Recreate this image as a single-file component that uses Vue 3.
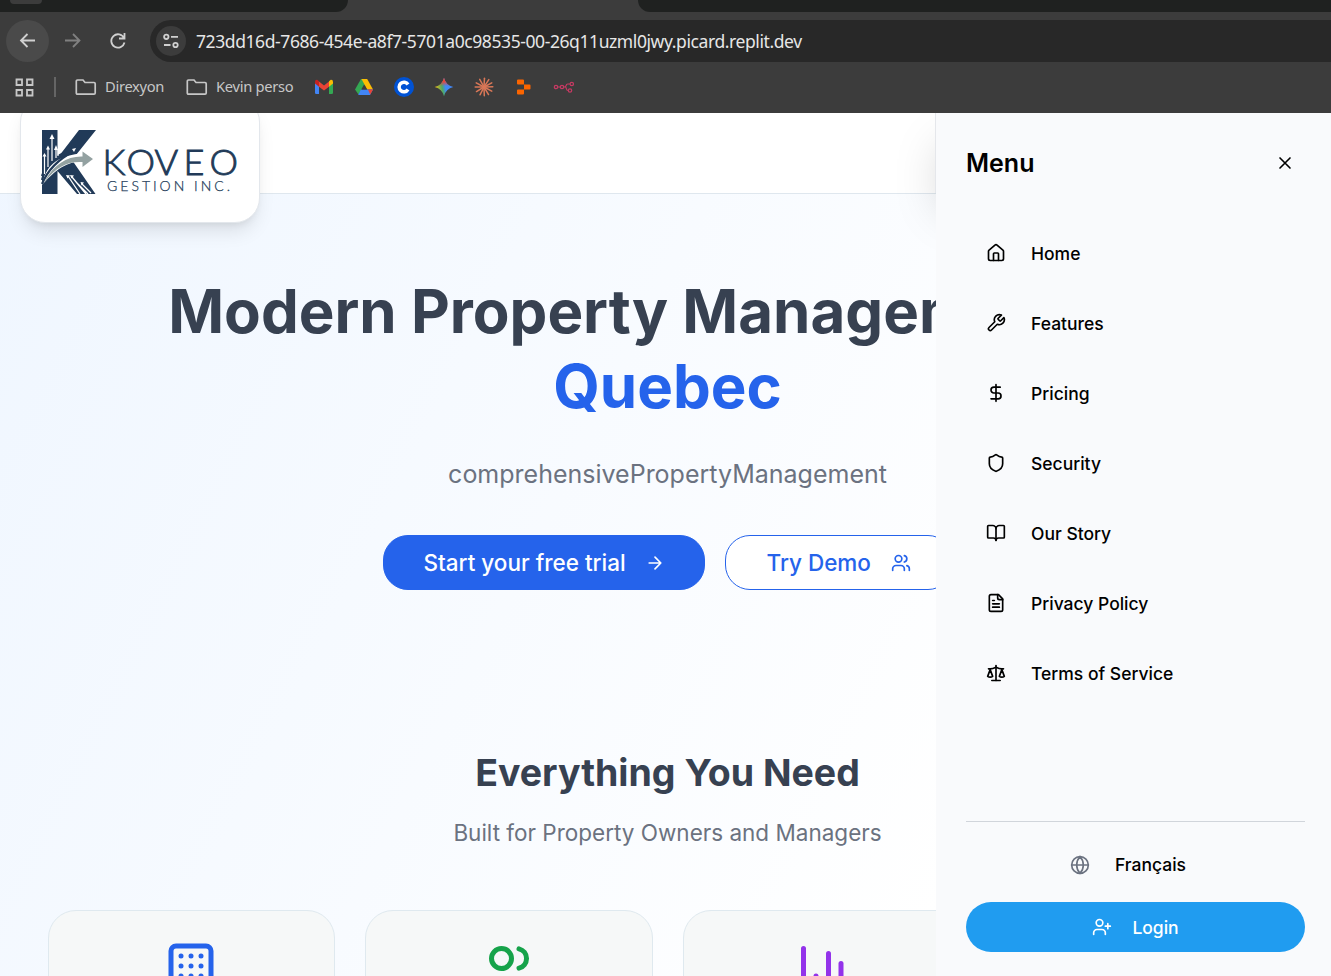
<script setup>
const menu = [
  { label: 'Home', d: ['M15 21v-8a1 1 0 0 0-1-1h-4a1 1 0 0 0-1 1v8', 'M3 10a2 2 0 0 1 .709-1.528l7-5.999a2 2 0 0 1 2.582 0l7 5.999A2 2 0 0 1 21 10v9a2 2 0 0 1-2 2H5a2 2 0 0 1-2-2z'] },
  { label: 'Features', d: ['M14.7 6.3a1 1 0 0 0 0 1.4l1.6 1.6a1 1 0 0 0 1.4 0l3.77-3.77a6 6 0 0 1-7.94 7.94l-6.91 6.91a2.12 2.12 0 0 1-3-3l6.91-6.91a6 6 0 0 1 7.94-7.94l-3.76 3.76z'] },
  { label: 'Pricing', d: ['M12 2v20', 'M17 5H9.5a3.5 3.5 0 0 0 0 7h5a3.5 3.5 0 0 1 0 7H6'] },
  { label: 'Security', d: ['M20 13c0 5-3.5 7.5-7.66 8.95a1 1 0 0 1-.67-.01C7.5 20.5 4 18 4 13V6a1 1 0 0 1 1-1c2 0 4.5-1.2 6.24-2.72a1.17 1.17 0 0 1 1.52 0C14.51 3.81 17 5 19 5a1 1 0 0 1 1 1z'] },
  { label: 'Our Story', d: ['M12 7v14', 'M3 18a1 1 0 0 1-1-1V4a1 1 0 0 1 1-1h5a4 4 0 0 1 4 4 4 4 0 0 1 4-4h5a1 1 0 0 1 1 1v13a1 1 0 0 1-1 1h-6a3 3 0 0 0-3 3 3 3 0 0 0-3-3z'] },
  { label: 'Privacy Policy', d: ['M15 2H6a2 2 0 0 0-2 2v16a2 2 0 0 0 2 2h12a2 2 0 0 0 2-2V7Z', 'M14 2v4a2 2 0 0 0 2 2h4', 'M10 9H8', 'M16 13H8', 'M16 17H8'] },
  { label: 'Terms of Service', d: ['m16 16 3-8 3 8c-.87.65-1.92 1-3 1s-2.13-.35-3-1Z', 'm2 16 3-8 3 8c-.87.65-1.92 1-3 1s-2.13-.35-3-1Z', 'M7 21h10', 'M12 3v18', 'M3 7h2c2 0 5-1 7-2 2 1 5 2 7 2h2'] },
]
const windows = [6, 10, 14].flatMap((y) => [8, 12, 16].map((x) => `M${x} ${y}h.01`))
const cards = [
  { tone: 'blue', d: ['M6 2h12a2 2 0 0 1 2 2v16a2 2 0 0 1-2 2H6a2 2 0 0 1-2-2V4a2 2 0 0 1 2-2z', 'M9 22v-4h6v4', ...windows] },
  { tone: 'green', d: ['M16 21v-2a4 4 0 0 0-4-4H6a4 4 0 0 0-4 4v2', 'M5 7a4 4 0 1 0 8 0a4 4 0 1 0-8 0', 'M22 21v-2a4 4 0 0 0-3-3.87', 'M16 3.13a4 4 0 0 1 0 7.75'] },
  { tone: 'purple', d: ['M3 3v18h18', 'M18 17V9', 'M13 17V5', 'M8 17v-3'] },
  { tone: 'blue', d: [] },
]
const rays = [3, 33, 62, 88, 118, 149, 178, 207, 239, 270, 298, 331]
</script>

<template>
  <div class="window">
    <div class="chrome">
      <div class="tabs">
        <div class="tab-left"><span class="tab-chip"></span></div>
        <div class="tab-active"></div>
        <div class="tab-right"></div>
      </div>
      <div class="toolbar">
        <div class="nav-btn back">
          <svg width="42" height="42" viewBox="0 0 42 42"><path d="M29 20.500H15M21.500 14l-6.500 6.500 6.500 6.500" /></svg>
        </div>
        <svg class="forward" width="20" height="20" viewBox="0 0 20 20"><path d="M2 9.500h14M10 3l6.500 6.500-6.500 6.500" /></svg>
        <svg class="reload" width="20" height="20" viewBox="0 0 20 20"><path d="M16 7A6.700 6.700 0 1 0 16.500 11.500M16.500 2v5.500H11" /></svg>
        <div class="address">
          <div class="site-info">
            <svg width="18" height="18" viewBox="0 0 18 18"><circle cx="4.300" cy="4.800" r="2.200" /><path d="M9 4.800h7M2 13h6.500" /><circle cx="13.500" cy="13" r="2.200" /></svg>
          </div>
          <span class="url">723dd16d-7686-454e-a8f7-5701a0c98535-00-26q11uzml0jwy.picard.replit.dev</span>
        </div>
      </div>
      <div class="bookmarks">
        <svg class="apps" width="20" height="20" viewBox="0 0 20 20"><path d="M2.500 2.500H8V8H2.500zM13 2.500h5.500V8H13zM2.500 13H8v5.500H2.500zM13 13h5.500v5.500H13z" /></svg>
        <span class="divider"></span>
        <svg class="folder first" width="22" height="18" viewBox="0 0 22 18"><path d="M2.500 2h5.500l2 2.500h9q1.200 0 1.200 1.200v9.300q0 1.200-1.200 1.200H2.500q-1.200 0-1.200-1.200V3.200Q1.300 2 2.500 2z" /></svg>
        <span class="bm direxyon">Direxyon</span>
        <svg class="folder" width="22" height="18" viewBox="0 0 22 18"><path d="M2.500 2h5.500l2 2.500h9q1.200 0 1.200 1.200v9.300q0 1.200-1.200 1.200H2.500q-1.200 0-1.200-1.200V3.200Q1.300 2 2.500 2z" /></svg>
        <span class="bm kevin">Kevin perso</span>
        <div class="favicons">
          <svg viewBox="0 0 20 20"><path fill="#4285f4" d="M1 5l4 3v9H2.200Q1 17 1 15.800z" /><path fill="#34a853" d="M19 5l-4 3v9h2.800q1.200 0 1.200-1.200z" /><path fill="#ea4335" d="M5 4.500l5 4 5-4v5.200l-5 3.900-5-3.900z" /><path fill="#c5221f" d="M1 5q0-2.500 2.200-2.200L5 4.200v5.500L1 6.600z" /><path fill="#fbbc04" d="M19 5q0-2.500-2.200-2.200L15 4.200v5.500l4-3.100z" /></svg>
          <svg viewBox="0 0 20 20"><path fill="#34a853" d="M7 2h3.500l2 3.200L4.500 17.500 1 12.500z" /><path fill="#fbbc04" d="M7.500 2h5.700L19 12.500h-5.800z" /><path fill="#4285f4" d="M6.800 12.500H19L16 18H4.200z" /><path fill="#ea4335" d="M14 12.500h5L16.200 17.500z" /><path fill="#3c3c3c" d="M10 7.600l2.900 4.900H7.200z" /></svg>
          <svg viewBox="0 0 20 20"><circle cx="10" cy="10" r="10" fill="#0052d4" /><path d="M14 7.500A4.800 4.800 0 1 0 14 12.500" fill="none" stroke="#fff" stroke-width="3.400" /></svg>
          <svg viewBox="0 0 20 20">
            <defs><linearGradient id="spark" x1="0" y1="0.600" x2="1" y2="0.400"><stop offset="0" stop-color="#fbbc04" /><stop offset=".4" stop-color="#4fa866" /><stop offset=".58" stop-color="#3f8bf5" /><stop offset="1" stop-color="#4285f4" /></linearGradient><linearGradient id="sparkTop" x1="0" y1="0" x2="0" y2="1"><stop offset="0" stop-color="#ea4335" /><stop offset=".2" stop-color="#ea4335" /><stop offset=".45" stop-color="#ea4335" stop-opacity="0" /></linearGradient></defs>
            <path fill="url(#spark)" d="M10 .7Q11.800 8.200 19.300 10 11.800 11.800 10 19.300 8.200 11.800.7 10 8.200 8.200 10 .7z" /><path fill="url(#sparkTop)" d="M10 .7Q11.800 8.200 19.300 10 11.800 11.800 10 19.300 8.200 11.800.7 10 8.200 8.200 10 .7z" />
          </svg>
          <svg viewBox="0 0 20 20"><g stroke="#d97757" stroke-width="1.500" stroke-linecap="round"><path v-for="r in rays" :key="r" d="M10 10V1.200" :transform="`rotate(${r} 10 10)`" /></g></svg>
          <svg viewBox="0 0 20 20"><path fill="#fc6500" d="M4 2.500h5q1 0 1 1v4H4q-1 0-1-1v-3q0-1 1-1zM10 7.500h5.500q1 0 1 1v3q0 1-1 1H10zM3 13.500q0-1 1-1h6v4q0 1-1 1H4q-1 0-1-1z" /></svg>
          <svg viewBox="0 0 20 20" class="nodes"><circle cx="2" cy="10" r="1.700" /><circle cx="8" cy="10" r="1.700" /><circle cx="17.800" cy="7" r="1.700" /><circle cx="16" cy="13.500" r="1.700" /><path d="M3.700 10h2.600M9.700 10h1q1.200 0 1.400-1.300Q12.300 7 13.800 7h2.300M11 10q1.200 0 1.400 1.800.2 1.700 2 1.700" /></svg>
        </div>
      </div>
    </div>

    <div class="page">
      <header class="header">
        <div class="logo-card">
          <svg class="mark" width="56" height="66" viewBox="0 0 56 66">
            <path fill="#213a58" d="M1 1h15.500v28L38 1h17L31 31 54.500 65H36L16.500 42v23H1z" />
            <path fill="#fff" d="M1 56C4 38 15 26 44 24v9C25 31 13 43 1 56z" />
            <path d="M1 51C5 36 13 28 23 24M1 47c3-9 8-16 15-21" stroke="#213a58" stroke-width="2.200" fill="none" />
            <path d="M1 55C7 40 18 30 33 22" stroke="#213a58" stroke-width="2.200" fill="none" />
            <path fill="#93a1a1" d="M5 50C13 36 26 27 41.500 27.500v-5L52 30l-10.500 8v-5C28 32 15 37 3 54z" />
            <path d="M3.500 45V27M7 38V20M11 32V8M15 29V20M17 27V20" stroke="#fff" stroke-width="1.200" />
            <path fill="#fff" d="M3.500 24l2 3.500h-4zM7 16.500l2 4H5zM11 5l2.500 5h-5zM15 16l2 5h-4zM31 20l4-1-2 4z" />
            <path d="M27 47l12 18M31 48l14 17M35 53l12 12M41 55l9 9" stroke="#fff" stroke-width="1.300" />
            <path fill="#fff" d="M25 46l4 .5-2.500 3zM29 46l4 .5-2.500 3zM39.500 53l3.500.5-2.500 3z" />
          </svg>
          <svg class="wordmark" width="136" height="66" viewBox="0 0 136 66">
            <text class="brand" x="-2.500 21.500 49.500 78.500 104.500" y="45.500">KOVEO</text>
            <text class="tag" x="2" y="62" textLength="123">GESTION INC.</text>
          </svg>
        </div>
      </header>

      <main class="hero">
        <h1>Modern Property Management for<br /><span>Quebec</span></h1>
        <p class="lead">comprehensivePropertyManagement</p>
        <div class="actions">
          <button class="btn primary">Start your free trial
            <svg class="ico" viewBox="0 0 24 24"><path d="M5 12h14M12 5l7 7-7 7" /></svg>
          </button>
          <button class="btn outline">Try Demo
            <svg class="ico" viewBox="0 0 24 24"><path d="M16 21v-2a4 4 0 0 0-4-4H6a4 4 0 0 0-4 4v2M22 21v-2a4 4 0 0 0-3-3.870M16 3.130a4 4 0 0 1 0 7.750" /><circle cx="9" cy="7" r="4" /></svg>
          </button>
        </div>
      </main>

      <section class="features">
        <h2>Everything You Need</h2>
        <p>Built for Property Owners and Managers</p>
        <div class="grid">
          <div v-for="(c, i) in cards" :key="i" class="card" :class="c.tone">
            <svg viewBox="0 0 24 24"><path v-for="d in c.d" :key="d" :d="d" /></svg>
          </div>
        </div>
      </section>

      <div class="drawer-shade"></div>
      <aside class="drawer">
        <div class="drawer-head">
          <h3>Menu</h3>
          <svg class="ico" viewBox="0 0 24 24"><path d="M18 6 6 18M6 6l12 12" /></svg>
        </div>
        <nav>
          <a v-for="m in menu" :key="m.label">
            <svg class="ico" viewBox="0 0 24 24"><path v-for="d in m.d" :key="d" :d="d" /></svg>
            <span>{{ m.label }}</span>
          </a>
        </nav>
        <div class="drawer-foot">
          <div class="lang">
            <svg class="ico" viewBox="0 0 24 24"><circle cx="12" cy="12" r="10" /><path d="M12 2a14.500 14.500 0 0 0 0 20 14.500 14.500 0 0 0 0-20M2 12h20" /></svg>
            <span>Français</span>
          </div>
          <button class="login">
            <svg class="ico" viewBox="0 0 24 24"><path d="M16 21v-2a4 4 0 0 0-4-4H6a4 4 0 0 0-4 4v2M19 8v6M22 11h-6" /><circle cx="9" cy="7" r="4" /></svg>
            <span>Login</span>
          </button>
        </div>
      </aside>
    </div>
  </div>
</template>

<style>
html, body { margin: 0; overflow: hidden; }
</style>

<style scoped>
* { box-sizing: border-box; }
.window { width: 1331px; height: 976px; overflow: hidden; display: flex; flex-direction: column; font-family: Inter, sans-serif; }
h1, h2, h3, p { margin: 0; }

.chrome { height: 113px; flex: none; background: #3c3c3c; font-family: "Noto Sans", sans-serif; overflow: hidden; }
.tabs { height: 12px; display: flex; background: #3c3c3c; }
.tab-left { width: 348px; background: #1f2120; border-bottom-right-radius: 14px; }
.tab-chip { display: block; width: 32px; height: 4px; margin-left: 10px; background: #3c3c3c; border-radius: 0 0 16px 16px; }
.tab-active { width: 290px; }
.tab-right { flex: 1; background: #1f2120; border-bottom-left-radius: 14px; }
.toolbar { height: 58px; display: flex; align-items: center; padding-left: 6px; }
.toolbar svg { fill: none; stroke: #d0d0d0; stroke-width: 1.8; flex: none; }
.nav-btn { width: 43px; height: 42px; border-radius: 50%; background: #4a4a4a; display: flex; }
.toolbar .forward { margin-left: 14px; stroke: #808080; }
.toolbar .reload { margin-left: 25px; }
.address { margin-left: 22px; flex: 1; height: 42px; border-radius: 21px 0 0 21px; background: #282828; display: flex; align-items: center; padding-left: 6px; }
.site-info { width: 30px; height: 30px; border-radius: 50%; background: #3c3c3c; display: flex; align-items: center; justify-content: center; }
.url { margin-left: 10px; font-size: 17.500px; letter-spacing: -0.41px; color: #e6e6e6; white-space: nowrap; }
.bookmarks { height: 34px; display: flex; align-items: center; padding-left: 14px; font-size: 14.700px; letter-spacing: -0.3px; color: #c7c7c7; }
.bookmarks .apps { fill: none; stroke: #c7c7c7; stroke-width: 1.8; }
.divider { width: 2px; height: 20px; background: #656565; margin-left: 20px; }
.folder { fill: none; stroke: #c7c7c7; stroke-width: 1.7; }
.folder.first { margin-left: 19px; }
.bm { margin-left: 8px; padding-bottom: 2px; white-space: nowrap; }
.direxyon { width: 81px; }
.kevin { width: 98px; }
.favicons { display: flex; gap: 20px; }
.favicons svg { width: 20px; height: 20px; overflow: visible; }
.nodes { fill: none; stroke: #c73a63; stroke-width: 1.2; }

.page { flex: 1; position: relative; overflow: hidden; background: linear-gradient(to bottom right, #eff6ff 0%, #fff 50%, #fff 100%) 0 0 / 1335px 2700px no-repeat; }
.header { height: 81px; background: #fff; border-bottom: 1px solid #dfe7ee; padding-left: 20px; }
.logo-card { position: relative; z-index: 1; width: 240px; height: 126px; transform: translateY(-16px); border: 1px solid #e3e7ec; border-radius: 25px; background: #fff; box-shadow: 0 12px 19px -4px rgba(0,0,0,.1), 0 5px 8px -5px rgba(0,0,0,.1); display: flex; padding: 31px 0 0 20px; }
.wordmark { margin-left: 8px; fill: #213a58; overflow: visible; }
.brand { font: 300 36px "Lato", sans-serif; stroke: #213a58; stroke-width: .9; }
.tag { font: 300 14px "Lato", sans-serif; stroke: #213a58; stroke-width: .25; }

.hero { width: 1335px; padding-top: 80px; text-align: center; }
h1 { font-size: 60px; line-height: 75px; font-weight: 700; color: #374151; white-space: nowrap; }
h1 span { color: #2563eb; }
.lead { margin-top: 30px; font-size: 25px; line-height: 40px; color: #6b7280; }
.actions { margin-top: 41px; display: flex; justify-content: center; gap: 20px; }
.btn { height: 55px; border-radius: 25px; border: 1px solid #2563eb; font: 500 22.500px/30px Inter, sans-serif; display: flex; align-items: center; justify-content: space-between; white-space: nowrap; }
.primary { width: 322px; padding: 0 39px 0 40px; background: #2563eb; color: #fff; }
.outline { width: 228px; padding: 0 41px; background: #fff; color: #2563eb; }
.ico { width: 20px; height: 20px; flex: none; fill: none; stroke: currentColor; stroke-width: 2; stroke-linecap: round; stroke-linejoin: round; }
.features { width: 1335px; padding: 158px 47.500px 0; text-align: center; }
h2 { font-size: 37.500px; line-height: 50px; color: #374151; }
.features p { margin-top: 17px; font-size: 22.500px; line-height: 35px; color: #6b7280; }
.grid { margin-top: 60px; display: grid; grid-template-columns: repeat(4, 1fr); gap: 30px; }
.card { height: 240px; padding-top: 30px; border: 1px solid #dfe9ef; border-radius: 28px; background: #f6f8f8; }
.card svg { width: 60px; height: 60px; fill: none; stroke: currentColor; stroke-width: 2; stroke-linecap: round; stroke-linejoin: round; }
.blue { color: #2563eb; }
.green { color: #16a34a; }
.purple { color: #9333ea; }

.drawer-shade { position: absolute; z-index: 2; top: 0; right: 0; width: 396px; height: 80px; border-left: 1px solid #e5e7eb; box-shadow: 0 25px 50px -12px rgba(0,0,0,.25); }
.drawer { position: absolute; z-index: 2; top: 0; right: 0; bottom: 0; width: 395px; padding: 30px 26px 24px 30px; background: #f9fafc; display: flex; flex-direction: column; color: #000; }
.drawer-head { height: 40px; display: flex; align-items: center; justify-content: space-between; padding-right: 10px; }
h3 { font-size: 25px; line-height: 35px; font-weight: 600; }
nav { margin-top: 40px; display: flex; flex-direction: column; gap: 10px; }
nav a { height: 60px; display: flex; align-items: center; padding-left: 20px; gap: 25px; font-size: 17.500px; font-weight: 500; }
.drawer-foot { margin-top: auto; border-top: 1px solid #d1d5db; }
.lang { height: 50px; margin-top: 18px; padding: 0 15px 1px 0; display: flex; align-items: center; justify-content: center; gap: 25px; font-size: 17.500px; font-weight: 500; }
.lang svg { color: #6b7280; }
.login { width: 100%; height: 50px; margin-top: 12px; border: 0; border-radius: 25px; background: #209cf0; color: #fff; display: flex; align-items: center; justify-content: center; gap: 20px; font: 500 17.500px Inter, sans-serif; }
</style>
